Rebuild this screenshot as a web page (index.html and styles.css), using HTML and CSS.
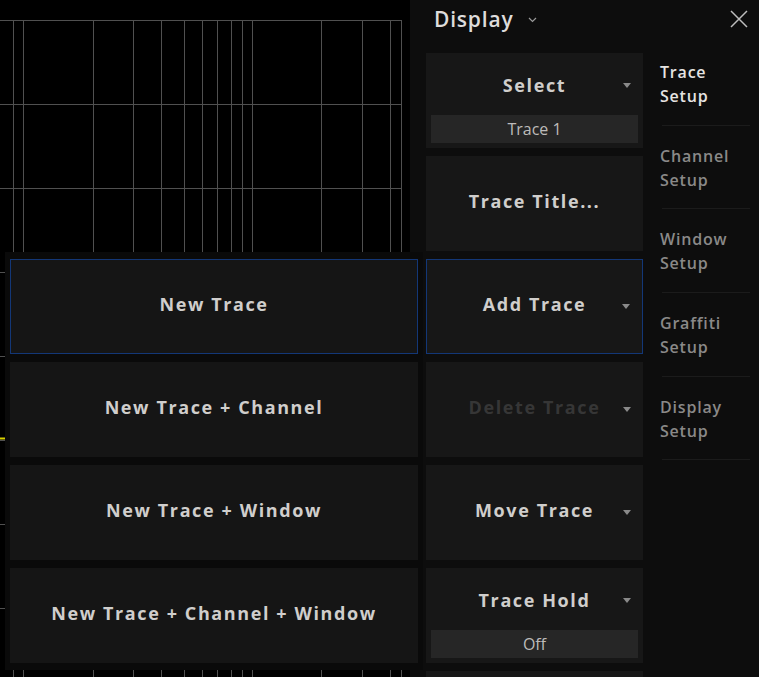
FILE: index.html
```html
<!DOCTYPE html>
<html lang="en">
<head>
    <meta charset="UTF-8">
    <meta name="viewport" content="width=device-width, initial-scale=1.0">
    <title>Display</title>
    <link rel="stylesheet" href="styles.css">
</head>
<body>
    <div class="screen">
        <div class="plot">
            <svg class="grid" width="410" height="677" viewBox="0 0 410 677">
                <g stroke="#505050" stroke-width="1">
                    <line x1="13.5" y1="20" x2="13.5" y2="677"/>
                    <line x1="23.5" y1="20" x2="23.5" y2="677"/>
                    <line x1="93.5" y1="20" x2="93.5" y2="677"/>
                    <line x1="133.5" y1="20" x2="133.5" y2="677"/>
                    <line x1="161.5" y1="20" x2="161.5" y2="677"/>
                    <line x1="184.5" y1="20" x2="184.5" y2="677"/>
                    <line x1="202.5" y1="20" x2="202.5" y2="677"/>
                    <line x1="217.5" y1="20" x2="217.5" y2="677"/>
                    <line x1="231.5" y1="20" x2="231.5" y2="677"/>
                    <line x1="242.5" y1="20" x2="242.5" y2="677"/>
                    <line x1="252.5" y1="20" x2="252.5" y2="677"/>
                    <line x1="321.5" y1="20" x2="321.5" y2="677"/>
                    <line x1="362.5" y1="20" x2="362.5" y2="677"/>
                    <line x1="390.5" y1="20" x2="390.5" y2="677"/>
                    <line x1="401.5" y1="20" x2="401.5" y2="677"/>
                    <line x1="0" y1="20.5" x2="402" y2="20.5"/>
                    <line x1="0" y1="104.5" x2="402" y2="104.5"/>
                    <line x1="0" y1="188.5" x2="402" y2="188.5"/>
                    <line x1="0" y1="272.5" x2="402" y2="272.5"/>
                    <line x1="0" y1="356.5" x2="402" y2="356.5"/>
                    <line x1="0" y1="440.5" x2="402" y2="440.5"/>
                    <line x1="0" y1="524.5" x2="402" y2="524.5"/>
                    <line x1="0" y1="608.5" x2="402" y2="608.5"/>
                </g>
                <line x1="0" y1="438.5" x2="5" y2="438.5" stroke="#d8d000" stroke-width="2"/>
            </svg>
        </div>

        <div class="panel">
            <div class="panel-header">
                <span class="panel-title">Display</span>
                <svg class="chevron" width="9" height="6" viewBox="0 0 9 6">
                    <path d="M1 1 L4.5 4.5 L8 1" fill="none" stroke="#9a9a9a" stroke-width="1.2"/>
                </svg>
                <svg class="close" width="18" height="18" viewBox="0 0 18 18">
                    <path d="M1 1 L17 17 M17 1 L1 17" stroke="#bdbdbd" stroke-width="1.5"/>
                </svg>
            </div>

            <div class="panel-body">
                <div class="actions">
                    <div class="btn has-sub">
                        <span class="btn-label">Select</span>
                        <span class="arrow"></span>
                        <span class="sub">Trace 1</span>
                    </div>
                    <div class="btn">
                        <span class="btn-label">Trace Title...</span>
                    </div>
                    <div class="btn active">
                        <span class="btn-label">Add Trace</span>
                        <span class="arrow"></span>
                    </div>
                    <div class="btn disabled">
                        <span class="btn-label">Delete Trace</span>
                        <span class="arrow"></span>
                    </div>
                    <div class="btn">
                        <span class="btn-label">Move Trace</span>
                        <span class="arrow"></span>
                    </div>
                    <div class="btn has-sub">
                        <span class="btn-label">Trace Hold</span>
                        <span class="arrow"></span>
                        <span class="sub">Off</span>
                    </div>
                    <div class="btn"></div>
                </div>

                <div class="tabs">
                    <div class="tab current">Trace<br>Setup</div>
                    <div class="tab">Channel<br>Setup</div>
                    <div class="tab">Window<br>Setup</div>
                    <div class="tab">Graffiti<br>Setup</div>
                    <div class="tab">Display<br>Setup</div>
                </div>
            </div>
        </div>

        <div class="menu">
            <div class="menu-item active">New Trace</div>
            <div class="menu-item">New Trace + Channel</div>
            <div class="menu-item">New Trace + Window</div>
            <div class="menu-item">New Trace + Channel + Window</div>
        </div>
    </div>
</body>
</html>
```

FILE: styles.css
```css
body {
    margin: 0;
    padding: 0;
    background-color: #000;
    font-family: "Open Sans", "DejaVu Sans", sans-serif;
    color: #d0cecc;
    overflow: hidden;
}

.screen {
    position: relative;
    display: flex;
    width: 759px;
    height: 677px;
    overflow: hidden;
}

.plot {
    width: 410px;
    height: 677px;
    flex-shrink: 0;
}

.grid {
    display: block;
}

.panel {
    width: 349px;
    height: 677px;
    background-color: #0d0d0d;
    display: flex;
    flex-direction: column;
}

.panel-header {
    height: 41px;
    display: flex;
    align-items: center;
    padding: 0 11px 4px 24px;
    box-sizing: border-box;
}

.panel-title {
    font-size: 21px;
    font-weight: 600;
    letter-spacing: 0.8px;
    color: #dedcdb;
}

.chevron {
    margin-left: 15px;
    margin-top: 3px;
}

.close {
    margin-left: auto;
}

.panel-body {
    display: flex;
    flex: 1;
    min-height: 0;
}

.actions {
    width: 217px;
    margin-left: 16px;
    padding-top: 12px;
    display: flex;
    flex-direction: column;
    gap: 8px;
}

.btn {
    position: relative;
    height: 95px;
    flex-shrink: 0;
    background-color: #171717;
    box-sizing: border-box;
    padding-bottom: 6px;
    display: flex;
    flex-direction: column;
    align-items: center;
    justify-content: center;
}

.btn-label {
    font-size: 18px;
    font-weight: 700;
    letter-spacing: 1.6px;
    color: #d0cecc;
}

.btn.has-sub {
    justify-content: flex-start;
    padding: 18px 5px 4px;
}

.btn.has-sub .btn-label {
    height: 28px;
    line-height: 28px;
}

.sub {
    align-self: stretch;
    margin-top: 16px;
    height: 28px;
    line-height: 28px;
    background-color: #262626;
    text-align: center;
    font-size: 16px;
    color: #bdbbba;
}

.btn.active {
    border: 1px solid #133777;
}

.btn.disabled .btn-label {
    color: #363636;
}

.arrow {
    position: absolute;
    right: 12px;
    top: 45px;
    width: 0;
    height: 0;
    border-left: 4px solid transparent;
    border-right: 4px solid transparent;
    border-top: 5px solid #8a8a8a;
}

.btn.has-sub .arrow {
    top: 30px;
}

.btn.active .arrow {
    top: 44px;
}

.tabs {
    width: 107px;
    margin-left: 9px;
    padding-top: 1px;
}

.tab {
    height: 83.7px;
    box-sizing: border-box;
    padding-left: 8px;
    display: flex;
    align-items: center;
    position: relative;
    font-size: 16px;
    font-weight: 600;
    line-height: 24px;
    letter-spacing: 0.8px;
    color: #8a8988;
}

.tab::after {
    content: "";
    position: absolute;
    left: 10px;
    right: 9px;
    bottom: 0;
    border-bottom: 1px solid #1b1b1b;
}

.tab.current {
    color: #e6e4e2;
}

.menu {
    position: absolute;
    left: 5px;
    top: 252px;
    width: 418px;
    height: 418px;
    background-color: #0a0a0a;
    box-sizing: border-box;
    padding: 7px 5px 0 5px;
    display: flex;
    flex-direction: column;
    gap: 8px;
}

.menu-item {
    height: 95px;
    flex-shrink: 0;
    background-color: #151515;
    box-sizing: border-box;
    padding-bottom: 6px;
    display: flex;
    align-items: center;
    justify-content: center;
    font-size: 18px;
    font-weight: 700;
    letter-spacing: 1.6px;
    color: #d0cecc;
}

.menu-item.active {
    border: 1px solid #133777;
}
```
